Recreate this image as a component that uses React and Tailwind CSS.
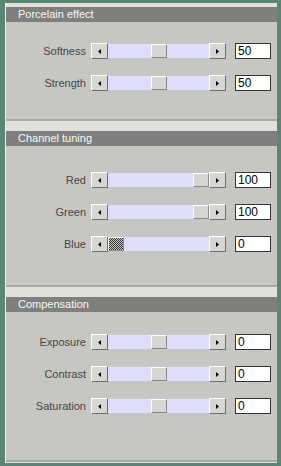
const panels = [
  {
    title: 'Porcelain effect',
    pad: 'pt-[21px]',
    body: 'h-[99px]',
    rows: [
      { label: 'Softness', value: 50 },
      { label: 'Strength', value: 50 },
    ],
  },
  {
    title: 'Channel tuning',
    pad: 'pt-[26px]',
    body: 'h-[141px]',
    rows: [
      { label: 'Red', value: 100 },
      { label: 'Green', value: 100 },
      { label: 'Blue', value: 0, focus: true },
    ],
  },
  {
    title: 'Compensation',
    pad: 'pt-[22px]',
    body: 'h-[150px]',
    rows: [
      { label: 'Exposure', value: 0, mid: true },
      { label: 'Contrast', value: 0, mid: true },
      { label: 'Saturation', value: 0, mid: true },
    ],
  },
];

function Arrow({ dir }) {
  return (
    <div className="w-[17px] h-[16px] bg-[#d6d6d2] border-t border-l border-t-white border-l-white border-b border-r border-b-[#6e6e6e] border-r-[#6e6e6e] flex items-center justify-center">
      <svg width="3" height="5" viewBox="0 0 3 5">
        {dir === 'left' ? <path d="M3 0 L0 2.5 L3 5 Z" fill="#000" /> : <path d="M0 0 L3 2.5 L0 5 Z" fill="#000" />}
      </svg>
    </div>
  );
}

function Slider({ value, focus, mid }) {
  // track 101px, thumb 16px
  const pct = mid ? 50 : value;
  const left = Math.round((85 * pct) / 100);
  return (
    <div className="flex items-center">
      <Arrow dir="left" />
      <div className="relative w-[101px] h-[14px] bg-[#dedefb]">
        <div
          className={`absolute top-0 h-[14px] w-[16px] border-t border-l border-t-white border-l-white border-b border-r border-b-[#8a8a8a] border-r-[#8a8a8a] ${
            focus
              ? 'bg-[repeating-conic-gradient(#333_0_25%,#c8c8c8_0_50%)] bg-[length:2px_2px]'
              : 'bg-[#d6d6d2]'
          }`}
          style={{ left }}
        />
      </div>
      <Arrow dir="right" />
    </div>
  );
}

export default function App() {
  return (
    <div className="w-[281px] h-[466px] bg-[#5d8576] pl-[5px] pr-[4px] pt-[3px] pb-[3px] font-['Liberation_Sans',Arial,sans-serif]">
      <div className="h-full bg-[#e0e0dc] pt-[4px] flex flex-col gap-[10px] border-l border-l-[#f0f0f0]">
        {panels.map((p) => (
          <div key={p.title} className="flex flex-col">
            <div className="h-[15px] bg-[#7f7f7f] text-[#f8f8f8] text-[11px] leading-[15px] pl-[12px]">{p.title}</div>
            <div className={`${p.body} ${p.pad} bg-[#c6c6c2] border-b-2 border-b-[#a8a8a4] flex flex-col gap-[16px]`}>
              {p.rows.map((r) => (
                <div key={r.label} className="flex items-center h-[16px]">
                  <div className="w-[80px] text-right text-[11px] text-[#474747]">{r.label}</div>
                  <div className="ml-[5px]">
                    <Slider value={r.value} focus={r.focus} mid={r.mid} />
                  </div>
                  <div className="ml-[9px] w-[36px] h-[16px] bg-white border border-[#333] text-[12px] leading-[14px] pl-[2px] text-black">
                    {r.value}
                  </div>
                </div>
              ))}
            </div>
          </div>
        ))}
      </div>
    </div>
  );
}
